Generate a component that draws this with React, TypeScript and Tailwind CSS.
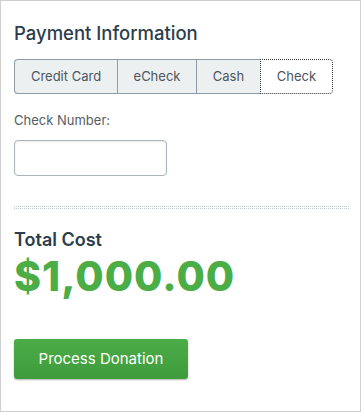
import React from "react";

export default function App() {
  const tabs = ["Credit Card", "eCheck", "Cash", "Check"];
  const widths = ["w-[103px]", "w-[79px]", "w-[64px]", "w-[73px]"];
  return (
    <div
      className="w-[361px] h-[412px] border border-[#cfcfcf] bg-white px-[13px] box-border"
      style={{ fontFamily: "Inter, 'Open Sans', sans-serif" }}
    >
      <h1 className="mt-[19px] text-[18.5px] leading-[26px] font-medium text-[#2c3e4c]">
        Payment Information
      </h1>
      <div className="mt-[13px] flex h-[35px] w-[319px]">
        {tabs.map((t, i) => {
          const active = i === 3;
          return (
            <div
              key={t}
              className={
                widths[i] +
                " flex items-center justify-center text-[13px] text-[#4b5660] " +
                (active
                  ? "bg-white border border-dotted border-[#333] rounded-r-[4px]"
                  : "bg-[#edf0f1] border-y border-l border-[#8d9ba4] " +
                    (i === 0 ? "rounded-l-[4px]" : ""))
              }
            >
              {t}
            </div>
          );
        })}
      </div>
      <div className="mt-[18px] text-[13px] leading-[16px] text-[#555d64]">Check Number:</div>
      <div className="mt-[12px] w-[153px] h-[36px] rounded-[4px] border border-[#a9b4bb] shadow-[inset_0_1px_2px_rgba(0,0,0,0.08)]" />
      <div className="mt-[30px] w-[335px] h-[3px] border-y border-dotted border-[#c3cbd0]" />
      <div className="mt-[19px] text-[18px] leading-[24px] font-semibold text-[#2c3e4c]">Total Cost</div>
      <div className="mt-0 text-[41px] leading-[48px] font-extrabold text-[#4aad46] tracking-[1px]">
        $1,000.00
      </div>
      <button className="mt-[39px] w-[174px] h-[40px] rounded-[3px] bg-[linear-gradient(#4bad48,#3f9b3c)] text-white text-[15px] shadow-[0_1px_2px_rgba(0,0,0,0.3)]">
        Process Donation
      </button>
    </div>
  );
}
